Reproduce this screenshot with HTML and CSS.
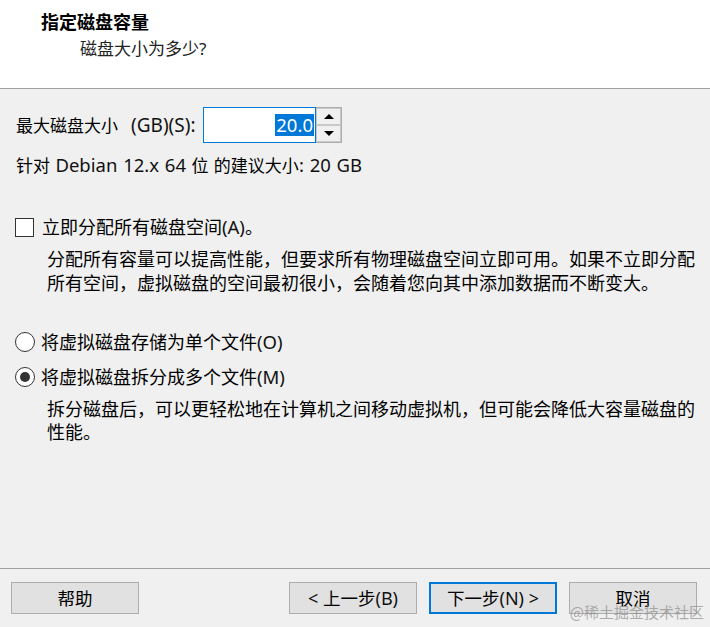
FILE: index.html
```html
<!DOCTYPE html>
<html lang="zh-CN">
<head>
<meta charset="utf-8">
<title>指定磁盘容量</title>
<link rel="stylesheet" href="styles.css">
</head>
<body>
<div class="window">
  <header class="header">
    <div class="title">指定磁盘容量</div>
    <div class="subtitle">磁盘大小为多少?</div>
  </header>

  <main class="main">
    <div class="size-row">
      <label class="size-label">最大磁盘大小<span class="lat gap">(GB)(S):</span></label>
      <div class="spin">
        <div class="spin-field"><span class="sel">20.0</span></div>
        <div class="spin-btns">
          <div class="spin-btn"><span class="tri-up"></span></div>
          <div class="spin-btn"><span class="tri-down"></span></div>
        </div>
      </div>
    </div>
    <div class="recommend">针对 <span class="lat">Debian 12.x 64</span> 位 的建议大小<span class="lat">: 20 GB</span></div>

    <div class="option check-row">
      <span class="checkbox"></span>
      <span class="opt-text">立即分配所有磁盘空间<span class="lat">(A)</span>。</span>
    </div>
    <p class="desc">分配所有容量可以提高性能，但要求所有物理磁盘空间立即可用。如果不立即分配所有空间，虚拟磁盘的空间最初很小，会随着您向其中添加数据而不断变大。</p>

    <div class="option radio-row first">
      <span class="radio"></span>
      <span class="opt-text">将虚拟磁盘存储为单个文件<span class="lat">(O)</span></span>
    </div>
    <div class="option radio-row second">
      <span class="radio checked"></span>
      <span class="opt-text">将虚拟磁盘拆分成多个文件<span class="lat">(M)</span></span>
    </div>
    <p class="desc desc2">拆分磁盘后，可以更轻松地在计算机之间移动虚拟机，但可能会降低大容量磁盘的性能。</p>
  </main>

  <footer class="footer">
    <button class="btn">帮助</button>
    <div class="btn-group">
      <button class="btn"><span class="lat">&lt; </span>上一步<span class="lat">(B)</span></button>
      <button class="btn default">下一步<span class="lat">(N) &gt;</span></button>
      <button class="btn">取消</button>
    </div>
  </footer>

  <div class="watermark">@稀土掘金技术社区</div>
</div>
</body>
</html>
```

FILE: styles.css
```css
* { box-sizing: border-box; }

html, body {
  margin: 0;
  padding: 0;
}

body {
  width: 710px;
  height: 627px;
  background: #f0f0f0;
  font-family: "Segoe UI", "Noto Sans", "Noto Sans CJK SC", sans-serif;
  color: #000;
  overflow: hidden;
}

.window {
  position: relative;
  width: 710px;
  height: 627px;
  display: flex;
  flex-direction: column;
}

.lat {
  font-size: 18.5px;
  color: #111;
}

.lat.gap {
  margin-left: 13px;
  font-size: 19px;
}

/* Header */
.header {
  height: 89px;
  background: #fff;
  border-bottom: 1px solid #a0a0a0;
  padding: 9px 0 0 41px;
  flex: none;
}

.title {
  font-size: 18px;
  font-weight: bold;
  line-height: 24px;
  font-family: "Noto Sans CJK SC", sans-serif;
}

.subtitle {
  margin-top: 4px;
  padding-left: 39px;
  font-size: 17px;
  line-height: 24px;
  color: #222;
}

/* Main */
.main {
  flex: 1;
  padding: 18px 0 0 16px;
  font-size: 17px;
}

.size-row {
  display: flex;
  align-items: center;
  height: 36px;
}

.size-label {
  width: 187px;
  font-size: 17px;
  line-height: 24px;
  white-space: nowrap;
}

.spin {
  display: flex;
  height: 36px;
}

.spin-field {
  width: 113px;
  height: 36px;
  background: #fff;
  border: 1px solid #0078d7;
  display: flex;
  align-items: center;
  justify-content: flex-end;
  padding-right: 1px;
}

.sel {
  background: #0078d7;
  color: #fff;
  font-size: 18.5px;
  line-height: 22px;
  padding: 0 1px;
}

.spin-btns {
  width: 26px;
  display: flex;
  flex-direction: column;
  border: 1px solid #adadad;
  border-left: none;
}

.spin-btn {
  flex: 1;
  background: #f0f0f0;
  border: 1px solid #c8c8c8;
  display: flex;
  align-items: center;
  justify-content: center;
}

.tri-up {
  width: 0;
  height: 0;
  border-left: 5px solid transparent;
  border-right: 5px solid transparent;
  border-bottom: 5px solid #000;
}

.tri-down {
  width: 0;
  height: 0;
  border-left: 5px solid transparent;
  border-right: 5px solid transparent;
  border-top: 5px solid #000;
}

.recommend {
  margin-top: 10px;
  line-height: 24px;
  font-size: 17px;
  word-spacing: 1px;
}

.option {
  display: flex;
  align-items: center;
  height: 24px;
  font-size: 18px;
  line-height: 24px;
}

.check-row {
  margin-top: 37px;
}

.checkbox {
  width: 19px;
  height: 19px;
  border: 1px solid #333;
  background: #fff;
  margin-left: -1px;
  margin-right: 8px;
  flex: none;
}

.radio {
  width: 20px;
  height: 20px;
  border: 1px solid #333;
  border-radius: 50%;
  background: #fff;
  margin-left: -1px;
  margin-right: 6px;
  flex: none;
  display: flex;
  align-items: center;
  justify-content: center;
}

.radio.checked::after {
  content: "";
  width: 10px;
  height: 10px;
  border-radius: 50%;
  background: #333;
}

.desc {
  margin: 8px 0 0 31px;
  width: 650px;
  font-size: 18px;
  line-height: 24px;
}

.radio-row.first {
  margin-top: 35px;
}

.radio-row.second {
  margin-top: 11px;
}

.desc2 {
  margin-top: 9px;
  line-height: 23px;
}

/* Footer */
.footer {
  height: 59px;
  flex: none;
  border-top: 1px solid #a0a0a0;
  padding: 13px 13px 0 11px;
  display: flex;
  align-items: flex-start;
}

.btn-group {
  margin-left: auto;
  display: flex;
  gap: 12px;
}

.btn {
  width: 128px;
  height: 32px;
  background: #e1e1e1;
  border: 1px solid #adadad;
  font-family: "Segoe UI", "Noto Sans", "Noto Sans CJK SC", sans-serif;
  font-size: 17.5px;
  color: #000;
  padding: 0;
  margin: 0;
  line-height: 28px;
}

.btn .lat {
  font-size: 18px;
}

.btn.default {
  border: 2px solid #0078d7;
}

.watermark {
  position: absolute;
  right: 6px;
  bottom: 6px;
  font-size: 15px;
  line-height: 18px;
  color: rgba(140, 140, 140, 0.7);
  font-family: "Noto Sans CJK SC", sans-serif;
}
```
